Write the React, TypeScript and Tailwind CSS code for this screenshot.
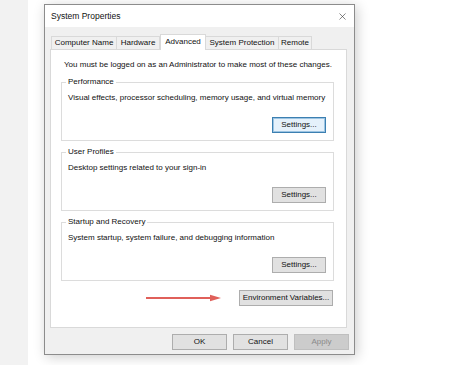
import { X } from 'lucide-react';

const font = { fontFamily: '"Liberation Sans", Arial, sans-serif' };

function WinButton({
  label,
  width,
  focused = false,
  disabled = false,
}: {
  label: string;
  width: string;
  focused?: boolean;
  disabled?: boolean;
}) {
  const base = 'h-[16px] flex items-center justify-center text-[8px] leading-none border';
  if (disabled) {
    return <div className={`${base} ${width} bg-[#cccccc] border-[#bfbfbf] text-[#8a8a8a]`}>{label}</div>;
  }
  if (focused) {
    return (
      <div className={`${base} ${width} bg-[#e5f1fb] border-[#3c7fb1] text-[#111] shadow-[inset_0_0_0_1px_#9cc4e2]`}>
        {label}
      </div>
    );
  }
  return <div className={`${base} ${width} bg-[#e1e1e1] border-[#adadad] text-[#111]`}>{label}</div>;
}

function Group({
  title,
  desc,
  focused = false,
  className = '',
}: {
  title: string;
  desc: string;
  focused?: boolean;
  className?: string;
}) {
  return (
    <fieldset className={`border border-[#dcdcdc] pl-[6px] pr-[7px] pb-[7px] ${className}`}>
      <legend className="-ml-[2px] px-[2px] h-[12px] leading-[12px] text-[8px] text-[#111]">{title}</legend>
      <div className="mt-[4px] h-[12px] leading-[12px] text-[8px] text-[#111]">{desc}</div>
      <div className="mt-[13px] flex justify-end">
        <WinButton label="Settings..." width="w-[54px]" focused={focused} />
      </div>
    </fieldset>
  );
}

const tabs = [
  { label: 'Computer Name', w: 'w-[66px]' },
  { label: 'Hardware', w: 'w-[44px]' },
  { label: 'Advanced', w: 'w-[46px]', active: true },
  { label: 'System Protection', w: 'w-[74px]' },
  { label: 'Remote', w: 'w-[34px]' },
];

export default function App() {
  return (
    <div className="w-[474px] h-[365px] flex bg-white overflow-hidden" style={font}>
      <div className="w-[28px] h-full bg-[#f2f2f2]" />
      <div className="flex-1 pl-[16px] pt-[4px]">
        {/* Dialog */}
        <div className="w-[311px] h-[351px] flex flex-col border border-[#8c8c8c] bg-[#f0f0f0] shadow-[2px_2px_12px_rgba(0,0,0,0.2)]">
          {/* Title bar */}
          <div className="h-[22px] bg-white flex items-center justify-between pl-[6px] pr-[6px]">
            <span className="text-[8.5px] text-[#111]">System Properties</span>
            <X size={11} strokeWidth={1.3} className="text-[#333]" />
          </div>

          {/* Tabs */}
          <div className="pt-[6px] pl-[6px] flex items-end h-[22px]">
            {tabs.map((t) =>
              t.active ? (
                <div
                  key={t.label}
                  className={`${t.w} h-[16px] -mb-px relative z-10 bg-white border border-b-0 border-[#d9d9d9] flex items-center justify-center text-[8px] text-[#111] pb-[2px]`}
                >
                  {t.label}
                </div>
              ) : (
                <div
                  key={t.label}
                  className={`${t.w} h-[13px] bg-[#f0f0f0] border border-b-0 border-[#d9d9d9] -ml-px first:ml-0 flex items-center justify-center text-[8px] text-[#111]`}
                >
                  {t.label}
                </div>
              )
            )}
          </div>

          {/* Tab page */}
          <div className="ml-[5px] mr-[7px] h-[279px] bg-white border border-[#d9d9d9] pl-[10px] pr-[12px] pt-[9px]">
            <div className="ml-[3px] h-[12px] leading-[12px] text-[8px] text-[#111]">
              You must be logged on as an Administrator to make most of these changes.
            </div>
            <Group
              className="mt-[5px]"
              title="Performance"
              desc="Visual effects, processor scheduling, memory usage, and virtual memory"
              focused
            />
            <Group className="mt-[5px]" title="User Profiles" desc="Desktop settings related to your sign-in" />
            <Group
              className="mt-[5px]"
              title="Startup and Recovery"
              desc="System startup, system failure, and debugging information"
            />
            <div className="mt-[9px] flex items-center justify-end">
              <svg width="76" height="8" viewBox="0 0 76 8" className="mr-[17px]">
                <line x1="0" y1="4" x2="68" y2="4" stroke="#e0605a" strokeWidth="2" />
                <path d="M64 0.8 L75 4 L64 7.2 Z" fill="#e0605a" />
              </svg>
              <div className="mr-[1px]">
                <WinButton label="Environment Variables..." width="w-[94px]" />
              </div>
            </div>
          </div>

          {/* Footer buttons */}
          <div className="mt-[6px] pr-[5px] flex justify-end gap-[6px]">
            <WinButton label="OK" width="w-[55px]" />
            <WinButton label="Cancel" width="w-[55px]" />
            <WinButton label="Apply" width="w-[55px]" disabled />
          </div>
        </div>
      </div>
    </div>
  );
}
